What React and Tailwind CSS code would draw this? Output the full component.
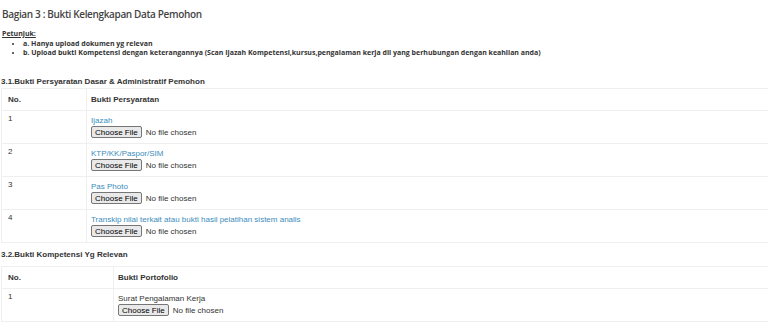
const rows1 = [
  { no: '1', label: 'Ijazah' },
  { no: '2', label: 'KTP/KK/Paspor/SIM' },
  { no: '3', label: 'Pas Photo' },
  { no: '4', label: 'Transkip nilai terkait atau bukti hasil pelatihan sistem analis' },
];

function FileInput() {
  return (
    <input
      type="file"
      className="block h-[12px] text-[8px] leading-[10px] text-[#333] file:mr-[4px] file:h-[12px] file:rounded-[2px] file:border file:border-[#767676] file:bg-[#e9e9e9] file:px-[3px] file:leading-[9px] file:text-black"
    />
  );
}

function Table({ colWidth, colPad, head, children }) {
  return (
    <div className="border-b border-l border-[#efefef] font-['Liberation_Sans',Arial,sans-serif] text-[8px] text-[#333]">
      <div className="flex border-t border-[#efefef] font-bold leading-[10px]">
        <div className={`${colWidth} shrink-0 border-r border-[#efefef] pb-[5px] pl-[6px] pt-[6px]`}>
          No.
        </div>
        <div className={`${colPad} pb-[5px] pt-[6px]`}>{head}</div>
      </div>
      {children}
    </div>
  );
}

function Row({ colWidth, colPad, no, children }) {
  return (
    <div className="flex border-t border-[#efefef] leading-[10px]">
      <div className={`${colWidth} shrink-0 border-r border-[#efefef] pl-[6px] pt-[3px]`}>{no}</div>
      <div className={`${colPad} pb-[5px] pt-[5px]`}>{children}</div>
    </div>
  );
}

export default function App() {
  return (
    <div className="min-h-[330px] bg-white pl-[1px]">
      <h3 className="pl-[1px] pt-[8px] font-['Open_Sans',sans-serif] text-[10px] font-semibold leading-[13px] tracking-[-0.35px] text-[#444]">
        Bagian 3 : Bukti Kelengkapan Data Pemohon
      </h3>

      <div className="mt-[8px] pl-[1px] font-['Open_Sans',sans-serif] text-[7px] font-bold leading-[9px] text-[#333]">
        <p className="mb-[1px] underline">Petunjuk:</p>
        <ul className="list-disc pl-[21px]">
          <li>a. Hanya upload dokumen yg relevan</li>
          <li>
            b. Upload bukti Kompetensi dengan keterangannya (Scan Ijazah Kompetensi,kursus,pengalaman kerja dll
            yang berhubungan dengan keahlian anda)
          </li>
        </ul>
      </div>

      <h4 className="mt-[20px] font-['Liberation_Sans',Arial,sans-serif] text-[8px] font-bold leading-[10px] text-[#333]">
        3.1.Bukti Persyaratan Dasar &amp; Administratif Pemohon
      </h4>
      <div className="mt-[1px]">
        <Table colWidth="w-[85px]" colPad="pl-[4px]" head="Bukti Persyaratan">
          {rows1.map((r) => (
            <Row key={r.no} colWidth="w-[85px]" colPad="pl-[4px]" no={r.no}>
              <div className="text-[#3c8dbc]">{r.label}</div>
              <FileInput />
            </Row>
          ))}
        </Table>
      </div>

      <h4 className="mt-[7px] font-['Liberation_Sans',Arial,sans-serif] text-[8px] font-bold leading-[10px] text-[#333]">
        3.2.Bukti Kompetensi Yg Relevan
      </h4>
      <div className="mt-[6px]">
        <Table colWidth="w-[112px]" colPad="pl-[4px]" head="Bukti Portofolio">
          <Row colWidth="w-[112px]" colPad="pl-[4px]" no="1">
            <div>Surat Pengalaman Kerja</div>
            <FileInput />
          </Row>
        </Table>
      </div>
    </div>
  );
}
